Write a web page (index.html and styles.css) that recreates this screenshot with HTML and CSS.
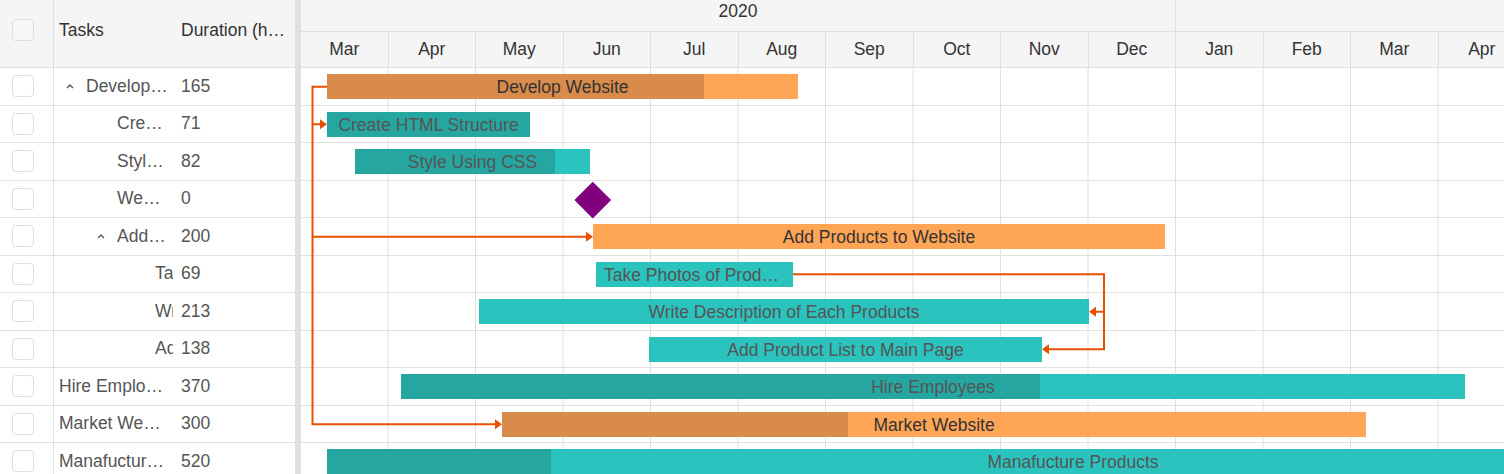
FILE: index.html
```html
<!DOCTYPE html>
<html lang="en">
<head>
    <meta charset="UTF-8">
    <meta name="viewport" content="width=device-width, initial-scale=1.0">
    <title>Project Gantt</title>
    <link rel="stylesheet" href="styles.css">
</head>
<body>

    <div class="gantt">

        <!-- Task grid -->
        <div class="grid">
            <div class="grid-header">
                <div class="cell check"><span class="checkbox"></span></div>
                <div class="cell task head">Tasks</div>
                <div class="cell dur head">Duration (hours)</div>
            </div>

            <div class="grid-row">
                <div class="cell check"><span class="checkbox"></span></div>
                <div class="cell task">
                    <span class="caret"><svg width="8" height="6" viewBox="0 0 8 6"><polyline points="1,5 4,2 7,5" fill="none" stroke="#555" stroke-width="1.4"/></svg></span>
                    <span class="label">Develop Website</span>
                </div>
                <div class="cell dur">165</div>
            </div>
            <div class="grid-row">
                <div class="cell check"><span class="checkbox"></span></div>
                <div class="cell task lvl1"><span class="caret"></span><span class="label">Create HTML Structure</span></div>
                <div class="cell dur">71</div>
            </div>
            <div class="grid-row">
                <div class="cell check"><span class="checkbox"></span></div>
                <div class="cell task lvl1"><span class="caret"></span><span class="label">Style Using CSS</span></div>
                <div class="cell dur">82</div>
            </div>
            <div class="grid-row">
                <div class="cell check"><span class="checkbox"></span></div>
                <div class="cell task lvl1"><span class="caret"></span><span class="label">Website Ready</span></div>
                <div class="cell dur">0</div>
            </div>
            <div class="grid-row">
                <div class="cell check"><span class="checkbox"></span></div>
                <div class="cell task lvl1">
                    <span class="caret"><svg width="8" height="6" viewBox="0 0 8 6"><polyline points="1,5 4,2 7,5" fill="none" stroke="#555" stroke-width="1.4"/></svg></span>
                    <span class="label">Add Products to Website</span>
                </div>
                <div class="cell dur">200</div>
            </div>
            <div class="grid-row">
                <div class="cell check"><span class="checkbox"></span></div>
                <div class="cell task lvl2"><span class="caret"></span><span class="label">Take Photos of Products</span></div>
                <div class="cell dur">69</div>
            </div>
            <div class="grid-row">
                <div class="cell check"><span class="checkbox"></span></div>
                <div class="cell task lvl2"><span class="caret"></span><span class="label">Write Description of Each Products</span></div>
                <div class="cell dur">213</div>
            </div>
            <div class="grid-row">
                <div class="cell check"><span class="checkbox"></span></div>
                <div class="cell task lvl2"><span class="caret"></span><span class="label">Add Product List to Main Page</span></div>
                <div class="cell dur">138</div>
            </div>
            <div class="grid-row">
                <div class="cell check"><span class="checkbox"></span></div>
                <div class="cell task"><span class="label">Hire Employees</span></div>
                <div class="cell dur">370</div>
            </div>
            <div class="grid-row">
                <div class="cell check"><span class="checkbox"></span></div>
                <div class="cell task"><span class="label">Market Website</span></div>
                <div class="cell dur">300</div>
            </div>
            <div class="grid-row">
                <div class="cell check"><span class="checkbox"></span></div>
                <div class="cell task"><span class="label">Manafucture Products</span></div>
                <div class="cell dur">520</div>
            </div>
        </div>

        <div class="splitter"></div>

        <!-- Timeline -->
        <div class="chart">
            <div class="chart-header">
                <div class="years">
                    <div class="year">2020</div>
                    <div class="year">2021</div>
                </div>
                <div class="months">
                    <div class="month">Mar</div>
                    <div class="month">Apr</div>
                    <div class="month">May</div>
                    <div class="month">Jun</div>
                    <div class="month">Jul</div>
                    <div class="month">Aug</div>
                    <div class="month">Sep</div>
                    <div class="month">Oct</div>
                    <div class="month">Nov</div>
                    <div class="month">Dec</div>
                    <div class="month">Jan</div>
                    <div class="month">Feb</div>
                    <div class="month">Mar</div>
                    <div class="month">Apr</div>
                    <div class="month">May</div>
                </div>
            </div>

            <div class="chart-body">
                <div class="chart-row">
                    <div class="bar summary" style="left: 26px; width: 471px;">
                        <div class="progress" style="width: 377px;"></div>
                        <div class="bar-label">Develop Website</div>
                    </div>
                </div>
                <div class="chart-row">
                    <div class="bar" style="left: 26px; width: 203px;">
                        <div class="progress" style="width: 203px;"></div>
                        <div class="bar-label">Create HTML Structure</div>
                    </div>
                </div>
                <div class="chart-row">
                    <div class="bar" style="left: 54px; width: 235px;">
                        <div class="progress" style="width: 200px;"></div>
                        <div class="bar-label">Style Using CSS</div>
                    </div>
                </div>
                <div class="chart-row">
                    <div class="milestone" style="left: 279px;"></div>
                </div>
                <div class="chart-row">
                    <div class="bar summary" style="left: 292px; width: 572px;">
                        <div class="bar-label">Add Products to Website</div>
                    </div>
                </div>
                <div class="chart-row">
                    <div class="bar" style="left: 295px; width: 197px;">
                        <div class="bar-label">Take Photos of Products</div>
                    </div>
                </div>
                <div class="chart-row">
                    <div class="bar" style="left: 178px; width: 610px;">
                        <div class="bar-label">Write Description of Each Products</div>
                    </div>
                </div>
                <div class="chart-row">
                    <div class="bar" style="left: 348px; width: 393px;">
                        <div class="bar-label">Add Product List to Main Page</div>
                    </div>
                </div>
                <div class="chart-row">
                    <div class="bar" style="left: 100px; width: 1064px;">
                        <div class="progress" style="width: 639px;"></div>
                        <div class="bar-label">Hire Employees</div>
                    </div>
                </div>
                <div class="chart-row">
                    <div class="bar summary" style="left: 201px; width: 864px;">
                        <div class="progress" style="width: 346px;"></div>
                        <div class="bar-label">Market Website</div>
                    </div>
                </div>
                <div class="chart-row">
                    <div class="bar" style="left: 26px; width: 1492px;">
                        <div class="progress" style="width: 224px;"></div>
                        <div class="bar-label">Manafucture Products</div>
                    </div>
                </div>

                <!-- Dependency connectors -->
                <svg class="links" width="1203" height="420">
                    <g fill="none" stroke="#e65100" stroke-width="2">
                        <path d="M26 18.75 H11.5 V356.25 H194"/>
                        <path d="M11.5 56.25 H19"/>
                        <path d="M11.5 168.75 H285"/>
                        <path d="M492 206.25 H803 V281.25 H748"/>
                        <path d="M803 243.75 H795"/>
                    </g>
                    <g fill="#e65100">
                        <polygon points="26,56.25 19,51.25 19,61.25"/>
                        <polygon points="292,168.75 285,163.75 285,173.75"/>
                        <polygon points="201,356.25 194,351.25 194,361.25"/>
                        <polygon points="788,243.75 795,238.75 795,248.75"/>
                        <polygon points="741,281.25 748,276.25 748,286.25"/>
                    </g>
                </svg>
            </div>
        </div>
    </div>

</body>
</html>
```

FILE: styles.css
```css
html, body {
    margin: 0;
    height: 100%;
    overflow: hidden;
}

body {
    font-family: "Liberation Sans", Arial, Helvetica, sans-serif;
    font-size: 17.5px;
    color: #555;
    background-color: #ffffff;
}

.gantt {
    display: flex;
    height: 100vh;
}

/* ---- task grid ---- */

.grid {
    width: 295px;
    flex-shrink: 0;
}

.grid-header {
    display: flex;
    height: 68px;
    box-sizing: border-box;
    background-color: #f5f5f5;
    border-bottom: 1px solid #e0e0e0;
}

.grid-header .cell {
    padding-bottom: 8px;
    color: #333;
}

.grid-row {
    display: flex;
    height: 37.5px;
    box-sizing: border-box;
    border-bottom: 1px solid #e0e0e0;
}

.cell {
    display: flex;
    align-items: center;
    box-sizing: border-box;
    overflow: hidden;
    white-space: nowrap;
}

.cell.check {
    width: 54px;
    justify-content: flex-start;
    padding-left: 12px;
    border-right: 1px solid #e0e0e0;
}

.checkbox {
    width: 22px;
    height: 22px;
    box-sizing: border-box;
    border: 1px solid #dedede;
    border-radius: 4px;
    background-color: #fff;
}

.grid-header .checkbox {
    background-color: #f7f7f7;
}

.cell.task {
    width: 119px;
    padding: 0 5px 0 5px;
}

.cell.task.lvl1 {
    padding-left: 36px;
}

.cell.task.lvl2 {
    padding-left: 74px;
}

.cell.dur {
    flex: 1;
    padding-left: 8px;
    padding-right: 8px;
}

.cell.head {
    display: block;
    line-height: 60px;
    text-overflow: ellipsis;
}

.caret {
    width: 27px;
    flex-shrink: 0;
    display: flex;
    align-items: center;
    padding-left: 7px;
    box-sizing: border-box;
}

.label {
    min-width: 0;
    overflow: hidden;
    text-overflow: ellipsis;
}

.lvl2 .label {
    flex-shrink: 0;
    overflow: visible;
}

.splitter {
    width: 6px;
    flex-shrink: 0;
    background-color: #e0e0e0;
}

/* ---- timeline ---- */

.chart {
    flex: 1;
    overflow: hidden;
    position: relative;
}

.chart-header {
    background-color: #f5f5f5;
    width: 1400px;
}

.years {
    display: flex;
    height: 32px;
    box-sizing: border-box;
    border-bottom: 1px solid #e0e0e0;
}

.year {
    width: 875px;
    flex-shrink: 0;
    box-sizing: border-box;
    border-right: 1px solid #e0e0e0;
    text-align: center;
    line-height: 22px;
    color: #333;
}

.months {
    display: flex;
    height: 36px;
    box-sizing: border-box;
    border-bottom: 1px solid #e0e0e0;
}

.month {
    width: 87.5px;
    flex-shrink: 0;
    box-sizing: border-box;
    border-right: 1px solid #e0e0e0;
    text-align: center;
    line-height: 35px;
    color: #333;
}

.chart-body {
    position: relative;
    width: 1400px;
    height: 420px;
    background-image: linear-gradient(to right, transparent 86.5px, #e0e0e0 86.5px);
    background-size: 87.5px 100%;
}

.chart-row {
    position: relative;
    height: 37.5px;
    box-sizing: border-box;
    border-bottom: 1px solid #e0e0e0;
}

.bar {
    position: absolute;
    top: 6px;
    height: 25px;
    background-color: #2ac3bd;
    overflow: hidden;
}

.bar .progress {
    position: absolute;
    left: 0;
    top: 0;
    bottom: 0;
    background-color: #25a6a0;
}

.bar.summary {
    background-color: #ffa556;
}

.bar.summary .progress {
    background-color: #d98b4b;
}

.bar-label {
    position: relative;
    padding: 0 8px;
    line-height: 26px;
    text-align: center;
    white-space: nowrap;
    overflow: hidden;
    text-overflow: ellipsis;
    color: #555;
}

.bar.summary .bar-label {
    color: #333;
}

.milestone {
    position: absolute;
    top: 6px;
    width: 25.5px;
    height: 25.5px;
    background-color: #800080;
    transform: rotate(45deg);
}

.links {
    position: absolute;
    left: 0;
    top: 0;
    pointer-events: none;
}
```
